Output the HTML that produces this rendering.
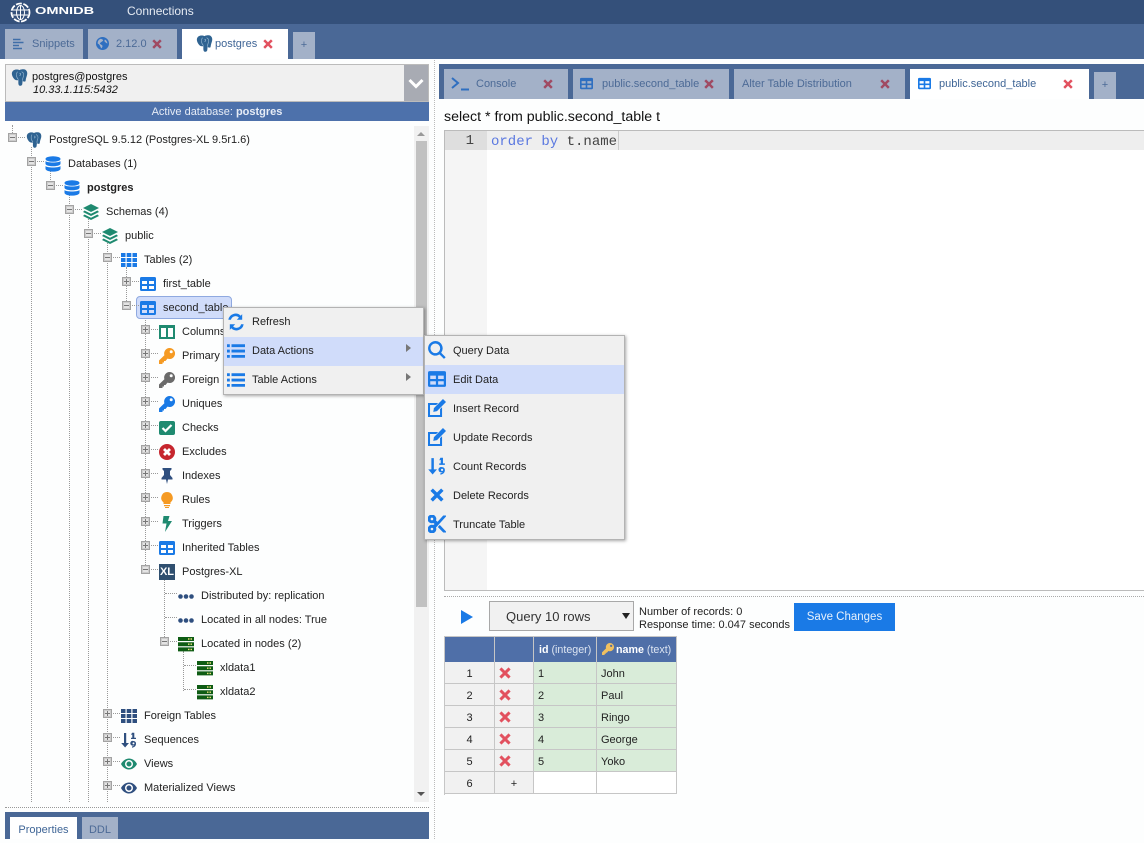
<!DOCTYPE html>
<html><head><meta charset="utf-8"><title>OmniDB</title>
<style>
*{box-sizing:border-box}
html,body{margin:0;padding:0}
body{width:1144px;height:839px;overflow:hidden;position:relative;background:#fdfefe;font:12px "Liberation Sans",sans-serif;color:#222}
div,span,svg{position:absolute;white-space:nowrap}
.tab{background:#a3b1c8;color:#4c6a96;line-height:30px;font-size:11px}
.tab.on{background:#fff;color:#3f6596}
.x{fill:#a04a62}
.r{height:24px;width:300px}
.r i{position:absolute}
.r .b{left:0;top:5px;width:9px;height:9px;background:#e4e4e4;border:1px solid #a3a3a3;box-shadow:inset 0 0 0 1px #ccc}
.r .b:before{content:"";position:absolute;left:1px;top:3px;width:5px;height:1px;background:#777}
.r .p:after{content:"";position:absolute;left:3px;top:1px;width:1px;height:5px;background:#777}
.r .h{left:10px;top:9px;width:7px;border-top:1px dotted #999}
.r .l{left:5px;width:12px}
.r svg{left:18px;top:4px;width:16px;height:16px}
.r span{left:41px;top:0;line-height:24px;font-size:11px;color:#222}
.v{width:0;border-left:1px dotted #999}
.m{background:#f0f0f0;border:1px solid #b3b3b3;box-shadow:1px 1px 3px rgba(0,0,0,.35)}
.i{left:0;right:0;height:29px;line-height:29px;font-size:11px;color:#222}
.m2 .i{line-height:31px}
.i.s{background:#d0dcfa}
.i span{left:28px}
.i svg{left:3px;top:5px;width:18px;height:18px;fill:#1a7ae6}
.i .ar{left:auto;right:12px;top:7px;width:0;height:0;border-left:5px solid #777;border-top:4px solid transparent;border-bottom:4px solid transparent}
.c{border-right:1px solid #c6c6c6;border-bottom:1px solid #c6c6c6;font-size:11px;line-height:25px;height:22px;color:#222}
.n{background:#f1f1f1;text-align:center}
.g{background:#d9ecd9;padding-left:4px}
.w{background:#fff}
.hd{background:#4f6fa8;color:#dde5f2;border-right:1px solid #c6c6c6;height:25px;line-height:27px;font-size:10.7px;top:637px}
.d{width:12px;height:12px;fill:#e2515f}
</style></head><body>
<svg width="0" height="0" style="display:none">
<symbol id="tb" viewBox="0 0 16 16"><path fill-rule="evenodd" d="M1.500 1h13A1.500 1.500 0 0 1 16 2.500v11a1.500 1.500 0 0 1-1.500 1.500h-13A1.500 1.500 0 0 1 0 13.500v-11A1.500 1.500 0 0 1 1.500 1zM2 5v3h5V5zm7 0v3h5V5zM2 10v3h5v-3zm7 0v3h5v-3z"/></symbol>
<symbol id="pg" viewBox="0 0 16 16"><path fill="#2f6391" d="M2 1.500C4 0 6.500.3 8 1c2-.9 4.500-1 6 0 1.700 1.500 1.500 4 .7 6-.6 1.600-.8 3-1 4.500-.9.6-2 .4-2.800-.2l-.3 3c-.3 1.600-2.500 2-3.300.7-.6-1.100-.3-3-.4-4.500C4.500 11 3.300 10 2.300 8.500.8 6.300 0 3.500 2 1.500z"/><path fill="none" stroke="#9fbdd6" stroke-width=".6" d="M6 2.500C4.500 5 5 8 7 10M10 2.500c2 1 2.500 3 1.500 5-.6 1.200-.5 2.500-.5 3.500M8 4c1.500 0 1.500 2 0 2"/></symbol>
<symbol id="db" viewBox="0 0 16 16"><g fill="#1a7ae6"><ellipse cx="8" cy="3" rx="7.500" ry="2.800"/><path d="M.5 5c1 2 14 2 15 0v3c-1 3-14 3-15 0zM.5 10c1 2 14 2 15 0v3c-1 3.500-14 3.500-15 0z"/></g></symbol>
<symbol id="ly" viewBox="0 0 16 16"><g fill="#1f8a70"><path d="M8 0l8 4-8 4-8-4z"/><path d="M1.500 6.500L8 9.800l6.500-3.300L16 8l-8 4-8-4z"/><path d="M1.500 10.500L8 13.800l6.500-3.300L16 12l-8 4-8-4z"/></g></symbol>
<symbol id="gr" viewBox="0 0 16 16"><path d="M0 1h4.500v4H0zM5.700 1h4.600v4H5.700zM11.500 1H16v4h-4.500zM0 6h4.500v4H0zM5.700 6h4.600v4H5.700zM11.500 6H16v4h-4.500zM0 11h4.500v4H0zM5.700 11h4.600v4H5.700zM11.500 11H16v4h-4.500z"/></symbol>
<symbol id="co" viewBox="0 0 16 16"><path fill="#1f8a70" fill-rule="evenodd" d="M0 1h16v14H0zM2 4v9h5V4zm7 0v9h5V4z"/></symbol>
<symbol id="ke" viewBox="0 0 16 16"><path fill-rule="evenodd" d="M10.500 0a5.500 5.500 0 1 1-2 10.600L6.500 13H5v1.500H3.500V16H0v-3.500l5.400-5.300A5.500 5.500 0 0 1 10.500 0zm1.700 2.300a1.500 1.500 0 1 0 0 3 1.500 1.500 0 0 0 0-3z"/></symbol>
<symbol id="ck" viewBox="0 0 16 16"><path fill="#1f8a70" d="M2 1h12a2 2 0 0 1 2 2v10a2 2 0 0 1-2 2H2a2 2 0 0 1-2-2V3a2 2 0 0 1 2-2z"/><path fill="none" stroke="#fff" stroke-width="2.200" d="M3.500 8l3 3 6-6"/></symbol>
<symbol id="ex" viewBox="0 0 16 16"><circle cx="8" cy="8" r="8" fill="#c6262e"/><path stroke="#fff" stroke-width="2.800" d="M5 5l6 6M11 5l-6 6"/></symbol>
<symbol id="pi" viewBox="0 0 16 16"><path fill="#2f4f7f" d="M3.500 0h9v1.500L11 3v4l2.500 3v1.500H9L8 16l-1-4.500H2.500V10L5 7V3L3.500 1.500z"/></symbol>
<symbol id="bu" viewBox="0 0 16 16"><path fill="#f59a23" d="M8 0a5.800 5.800 0 0 1 3.500 10.400V12h-7v-1.600A5.800 5.800 0 0 1 8 0zM5 13h6v1.200H5zM6 15h4v1H6z"/></symbol>
<symbol id="bo" viewBox="0 0 16 16"><path fill="#1f8a70" d="M4.500 0h6L9 5h4L6 16l1.500-8.500H3.500z"/></symbol>
<symbol id="dt" viewBox="0 0 16 16"><g fill="#2f4f7f"><circle cx="2.500" cy="8.500" r="2.300"/><circle cx="8" cy="8.500" r="2.300"/><circle cx="13.500" cy="8.500" r="2.300"/></g></symbol>
<symbol id="sv" viewBox="0 0 16 16"><path fill="#0e5c14" d="M0 1h16v4H0zM0 6.200h16v4H0zM0 11.400h16v4H0z"/><path fill="#e8e07a" d="M10 2.300h1.500v1.400H10zM12.500 2.300H14v1.400h-1.500zM10 7.500h1.500v1.400H10zM12.500 7.500H14v1.400h-1.500zM10 12.700h1.500v1.400H10zM12.500 12.700H14v1.400h-1.500z"/></symbol>
<symbol id="so" viewBox="0 0 16 16"><path d="M3 1h2.200v10H8l-3.900 4.500L.2 11H3z"/><path d="M11 .7h2.300v5H15V7h-5V5.700h1.300V2.500l-1.300.5zM12.500 9a2.500 2.500 0 0 1 2.500 3c-.2 2-1.500 3.400-4 3.700v-1.300c1-.1 1.800-.5 2.100-1.200A2.400 2.400 0 1 1 12.500 9zm0 1.400a1 1 0 1 0 0 2 1 1 0 0 0 0-2z"/></symbol>
<symbol id="ey" viewBox="0 0 16 16"><path fill-rule="evenodd" d="M8 2.500c3.500 0 6.500 2.400 8 5.500-1.500 3.100-4.500 5.500-8 5.500S1.500 11.100 0 8c1.500-3.100 4.500-5.500 8-5.500zM8 4a4 4 0 1 0 0 8 4 4 0 0 0 0-8zm0 1.500a2.500 2.500 0 1 1 0 5 2.500 2.500 0 0 1 0-5z"/></symbol>
<symbol id="li" viewBox="0 0 16 16"><path d="M0 2h2.500v2.500H0zM4 2h12v2.500H4zM0 6.800h2.500v2.500H0zM4 6.800h12v2.500H4zM0 11.500h2.500V14H0zM4 11.500h12V14H4z"/></symbol>
<symbol id="re" viewBox="0 0 16 16"><path d="M13.500 1v5H8.700l1.900-1.900A4.200 4.200 0 0 0 3.500 6H1.200a6.500 6.500 0 0 1 11-3.600zM2.500 15v-5h4.800l-1.900 1.900A4.200 4.200 0 0 0 12.500 10h2.300a6.500 6.500 0 0 1-11 3.600z"/></symbol>
<symbol id="se" viewBox="0 0 16 16"><path fill-rule="evenodd" d="M6.500 0a6.500 6.500 0 0 1 5.200 10.400l4 4-1.500 1.500-4-4A6.500 6.500 0 1 1 6.500 0zm0 2.200a4.300 4.300 0 1 0 0 8.600 4.300 4.300 0 0 0 0-8.600z"/></symbol>
<symbol id="ed" viewBox="0 0 16 16"><path d="M0 3.500h9L7.300 5.300H1.800v8.900h8.900V9l1.800-1.800V16H0z"/><path d="M13.300 0L16 2.700 8 10.800l-3.300.6.600-3.300z"/></symbol>
<symbol id="xx" viewBox="0 0 16 16"><path d="M3.300 1.500L8 6.200l4.700-4.700 2.800 2.800L10.800 9l4.700 4.700-2.800 2.800L8 11.800l-4.700 4.700-2.800-2.800L5.200 9 .5 4.300z" transform="translate(0 -1)"/></symbol>
<symbol id="sc" viewBox="0 0 16 16"><path stroke="#1a7ae6" stroke-width=".7" fill-rule="evenodd" d="M3.500 0a3.500 3.500 0 0 1 3.200 4.900L8.500 6.600 13.700.8H16L6.700 11.100A3.500 3.500 0 1 1 4.800 9.300L6.500 8 4.800 6.700A3.500 3.500 0 1 1 3.500 0zm0 2a1.500 1.500 0 1 0 0 3 1.500 1.500 0 0 0 0-3zm0 9a1.500 1.500 0 1 0 0 3 1.500 1.500 0 0 0 0-3zM10.500 9.300L16 15.200h-2.300L9.200 10.700z"/></symbol>
<symbol id="gl" viewBox="0 0 16 16"><path fill-rule="evenodd" d="M8 0a8 8 0 1 1 0 16A8 8 0 0 1 8 0zM5 2.500C3 3.500 2 5.500 2 8c1 .5 2 1 3 3 .5 1 1 2 1.500 3 1-1 1.500-2 1.500-3 0-1-2-1.500-3-2.500S7 6 8 5c1-.5 1-1.500 0-2S6 2 5 2.500zM11 3c-.5 1-1 2 0 3s2 1.500 3 2c0-2-1-4-3-5z"/></symbol>
<symbol id="sn" viewBox="0 0 16 16"><path d="M0 1h10v2H0zM0 5h14v2H0zM0 9h8v2H0zM0 13h12v2H0z"/></symbol>
</svg>

<!-- top nav -->
<div style="left:0;top:0;width:1144px;height:24px;background:#34507a"></div>
<svg style="left:10px;top:2px;width:21px;height:21px" viewBox="0 0 21 21" fill="none" stroke="#fff"><circle cx="10.500" cy="10.500" r="9" stroke-width="1.800" stroke-dasharray="6 1.500"/><ellipse cx="10.500" cy="10.500" rx="4" ry="7" stroke-width="1"/><path d="M3 8h15M3 13h15M10.500 3v15" stroke-width="1"/></svg>
<div style="left:35px;top:1px;line-height:22px;font-size:10px;font-weight:bold;color:#fff;transform:scaleX(1.46);transform-origin:left">OMNIDB</div>
<div style="left:127px;top:0;line-height:22px;font-size:12px;color:#e6ebf3">Connections</div>

<!-- outer tabs -->
<div style="left:0;top:24px;width:1144px;height:35px;background:#4a6896"></div>
<div class="tab" style="left:5px;top:29px;width:78px;height:30px"><svg style="left:8px;top:9px;width:12px;height:12px;fill:#3f6ea8"><use href="#sn"/></svg><span style="left:27px">Snippets</span></div>
<div class="tab" style="left:88px;top:29px;width:89px;height:30px"><svg style="left:8px;top:8px;width:13px;height:13px;fill:#2f6fc0"><use href="#gl"/></svg><span style="left:28px">2.12.0</span><svg class="x" style="left:64px;top:10px;width:10px;height:10px"><use href="#xx"/></svg></div>
<div class="tab on" style="left:182px;top:29px;width:106px;height:30px"><svg style="left:14px;top:6px;width:17px;height:17px"><use href="#pg"/></svg><span style="left:33px">postgres</span><svg style="left:81px;top:10px;width:10px;height:10px;fill:#e2515f"><use href="#xx"/></svg></div>
<div class="tab" style="left:293px;top:32px;width:22px;height:27px;line-height:27px;text-align:center">+</div>

<!-- connection select -->
<div style="left:5px;top:64px;width:424px;height:38px;background:#f0f0f0;border:1px solid #bbb"></div>
<svg style="left:11px;top:69px;width:17px;height:17px"><use href="#pg"/></svg>
<div style="left:32px;top:70px;line-height:14px;font-size:11px;color:#111">postgres@postgres</div>
<div style="left:33px;top:83px;line-height:14px;font-size:11px;font-style:italic;color:#111">10.33.1.115:5432</div>
<div style="left:404px;top:65px;width:24px;height:36px;background:#a8abb3"></div>
<svg style="left:408px;top:78px;width:16px;height:11px" viewBox="0 0 16 11" fill="none" stroke="#fff" stroke-width="3"><path d="M1.500 2L8 8.500 14.500 2"/></svg>
<div style="left:5px;top:102px;width:424px;height:19px;background:#4d71ab;color:#e6ecf6;text-align:center;line-height:20px;font-size:11px">Active database: <b>postgres</b></div>

<!-- tree scrollbar -->
<div style="left:414px;top:126px;width:15px;height:676px;background:#f1f1f1"></div>
<div style="left:416px;top:141px;width:11px;height:466px;background:#c1c1c1"></div>
<div style="left:417px;top:132px;width:0;height:0;border-left:4px solid transparent;border-right:4px solid transparent;border-bottom:4px solid #999"></div>
<div style="left:417px;top:792px;width:0;height:0;border-left:4px solid transparent;border-right:4px solid transparent;border-top:4px solid #555"></div>

<!-- tree guides -->
<div class="v" style="left:12px;top:125px;height:8px"></div>
<div class="v" style="left:31px;top:147px;height:655px"></div>
<div class="v" style="left:50px;top:170px;height:12px"></div>
<div class="v" style="left:69px;top:195px;height:607px"></div>
<div class="v" style="left:88px;top:219px;height:583px"></div>
<div class="v" style="left:107px;top:243px;height:559px"></div>
<div class="v" style="left:126px;top:267px;height:36px"></div>
<div class="v" style="left:145px;top:315px;height:252px"></div>
<div class="v" style="left:164px;top:579px;height:60px"></div>
<div class="v" style="left:183px;top:651px;height:40px"></div>

<!-- tree rows -->
<div style="left:136px;top:296px;width:96px;height:23px;background:#d0dcfa;border:1px solid #8fa9e0;border-radius:4px"></div>
<div class="r" style="left:8px;top:128px"><i class="b"></i><i class="h"></i><svg><use href="#pg"/></svg><span>PostgreSQL 9.5.12 (Postgres-XL 9.5r1.6)</span></div>
<div class="r" style="left:27px;top:152px"><i class="b"></i><i class="h"></i><svg><use href="#db"/></svg><span>Databases (1)</span></div>
<div class="r" style="left:46px;top:176px"><i class="b"></i><i class="h"></i><svg><use href="#db"/></svg><span><b>postgres</b></span></div>
<div class="r" style="left:65px;top:200px"><i class="b"></i><i class="h"></i><svg><use href="#ly"/></svg><span>Schemas (4)</span></div>
<div class="r" style="left:84px;top:224px"><i class="b"></i><i class="h"></i><svg><use href="#ly"/></svg><span>public</span></div>
<div class="r" style="left:103px;top:248px"><i class="b"></i><i class="h"></i><svg style="fill:#1a7ae6"><use href="#gr"/></svg><span>Tables (2)</span></div>
<div class="r" style="left:122px;top:272px"><i class="b p"></i><i class="h"></i><svg style="fill:#1a7ae6"><use href="#tb"/></svg><span>first_table</span></div>
<div class="r" style="left:122px;top:296px"><i class="b"></i><i class="h"></i><svg style="fill:#1a7ae6"><use href="#tb"/></svg><span>second_table</span></div>
<div class="r" style="left:141px;top:320px"><i class="b p"></i><i class="h"></i><svg><use href="#co"/></svg><span>Columns</span></div>
<div class="r" style="left:141px;top:344px"><i class="b p"></i><i class="h"></i><svg style="fill:#f59a23"><use href="#ke"/></svg><span>Primary</span></div>
<div class="r" style="left:141px;top:368px"><i class="b p"></i><i class="h"></i><svg style="fill:#6b6b6b"><use href="#ke"/></svg><span>Foreign</span></div>
<div class="r" style="left:141px;top:392px"><i class="b p"></i><i class="h"></i><svg style="fill:#1a7ae6"><use href="#ke"/></svg><span>Uniques</span></div>
<div class="r" style="left:141px;top:416px"><i class="b p"></i><i class="h"></i><svg><use href="#ck"/></svg><span>Checks</span></div>
<div class="r" style="left:141px;top:440px"><i class="b p"></i><i class="h"></i><svg><use href="#ex"/></svg><span>Excludes</span></div>
<div class="r" style="left:141px;top:464px"><i class="b p"></i><i class="h"></i><svg><use href="#pi"/></svg><span>Indexes</span></div>
<div class="r" style="left:141px;top:488px"><i class="b p"></i><i class="h"></i><svg><use href="#bu"/></svg><span>Rules</span></div>
<div class="r" style="left:141px;top:512px"><i class="b p"></i><i class="h"></i><svg><use href="#bo"/></svg><span>Triggers</span></div>
<div class="r" style="left:141px;top:536px"><i class="b p"></i><i class="h"></i><svg style="fill:#1a7ae6"><use href="#tb"/></svg><span>Inherited Tables</span></div>
<div class="r" style="left:141px;top:560px"><i class="b"></i><i class="h"></i><div style="left:18px;top:4px;width:16px;height:16px;background:#2f4f6f;color:#fff;font:bold 11px/16px 'Liberation Sans',sans-serif;text-align:center">XL</div><span>Postgres-XL</span></div>
<div class="r" style="left:160px;top:584px"><i class="h l"></i><svg><use href="#dt"/></svg><span>Distributed by: replication</span></div>
<div class="r" style="left:160px;top:608px"><i class="h l"></i><svg><use href="#dt"/></svg><span>Located in all nodes: True</span></div>
<div class="r" style="left:160px;top:632px"><i class="b"></i><i class="h"></i><svg><use href="#sv"/></svg><span>Located in nodes (2)</span></div>
<div class="r" style="left:179px;top:656px"><i class="h l"></i><svg><use href="#sv"/></svg><span>xldata1</span></div>
<div class="r" style="left:179px;top:680px"><i class="h l"></i><svg><use href="#sv"/></svg><span>xldata2</span></div>
<div class="r" style="left:103px;top:704px"><i class="b p"></i><i class="h"></i><svg style="fill:#2f4f7f"><use href="#gr"/></svg><span>Foreign Tables</span></div>
<div class="r" style="left:103px;top:728px"><i class="b p"></i><i class="h"></i><svg style="fill:#2f4f7f"><use href="#so"/></svg><span>Sequences</span></div>
<div class="r" style="left:103px;top:752px"><i class="b p"></i><i class="h"></i><svg style="fill:#1f8a70"><use href="#ey"/></svg><span>Views</span></div>
<div class="r" style="left:103px;top:776px"><i class="b p"></i><i class="h"></i><svg style="fill:#2f4f7f"><use href="#ey"/></svg><span>Materialized Views</span></div>

<!-- bottom left -->
<div style="left:5px;top:807px;width:424px;border-top:1px dotted #999"></div>
<div style="left:5px;top:812px;width:424px;height:27px;background:#4a6896"></div>
<div class="tab on" style="left:10px;top:817px;width:67px;height:22px;line-height:26px;text-align:center">Properties</div>
<div class="tab" style="left:82px;top:817px;width:36px;height:22px;line-height:26px;text-align:center">DDL</div>

<div class="v" style="left:434px;top:60px;height:779px;border-color:#bbb"></div>

<!-- right tabs -->
<div style="left:439px;top:64px;width:705px;height:35px;background:#4a6896"></div>
<div class="tab" style="left:444px;top:69px;width:124px;height:30px"><svg style="left:7px;top:7px;width:18px;height:16px" viewBox="0 0 18 16" fill="none" stroke="#2f6fc0" stroke-width="2"><path d="M1 2l6 5-6 5M10 13.500h8"/></svg><span style="left:32px">Console</span><svg class="x" style="left:99px;top:10px;width:10px;height:10px"><use href="#xx"/></svg></div>
<div class="tab" style="left:573px;top:69px;width:156px;height:30px"><svg style="left:7px;top:8px;width:13px;height:13px;fill:#2f6fc0"><use href="#tb"/></svg><span style="left:29px">public.second_table</span><svg class="x" style="left:131px;top:10px;width:10px;height:10px"><use href="#xx"/></svg></div>
<div class="tab" style="left:734px;top:69px;width:171px;height:30px"><span style="left:8px">Alter Table Distribution</span><svg class="x" style="left:146px;top:10px;width:10px;height:10px"><use href="#xx"/></svg></div>
<div class="tab on" style="left:910px;top:69px;width:179px;height:30px"><svg style="left:8px;top:8px;width:13px;height:13px;fill:#1a7ae6"><use href="#tb"/></svg><span style="left:29px">public.second_table</span><svg style="left:153px;top:10px;width:10px;height:10px;fill:#e2515f"><use href="#xx"/></svg></div>
<div class="tab" style="left:1094px;top:72px;width:22px;height:27px;line-height:27px;text-align:center">+</div>

<!-- editor -->
<div style="left:444px;top:110px;line-height:15px;font-size:14.2px;color:#111">select * from public.second_table t</div>
<div style="left:444px;top:130px;width:700px;height:461px;border:1px solid #bbb;border-right:0;background:#fff"></div>
<div style="left:445px;top:131px;width:42px;height:459px;background:#f5f5f5"></div>
<div style="left:445px;top:131px;width:42px;height:19px;background:#dedede;color:#444;font:14px/20px 'Liberation Mono',monospace;text-align:right;padding-right:13px">1</div>
<div style="left:487px;top:131px;width:657px;height:19px;background:#eee"></div>
<div style="left:491px;top:132px;font:14px/20px 'Liberation Mono',monospace;color:#444"><span style="position:static;color:#5a78e0">order by</span> t.name</div>
<div style="left:618px;top:131px;width:1px;height:19px;background:#ccc"></div>
<div style="left:444px;top:596px;width:700px;border-top:1px dotted #aaa"></div>

<!-- results toolbar -->
<svg style="left:461px;top:610px;width:12px;height:14px" viewBox="0 0 12 14"><path fill="#1a7ae6" d="M0 0l12 7-12 7z"/></svg>
<div style="left:489px;top:601px;width:145px;height:30px;background:#f1f1f1;border:1px solid #a8a8a8;font-size:13px;line-height:29px;color:#333;padding-left:16px">Query 10 rows</div>
<div style="left:622px;top:613px;width:0;height:0;border-left:4px solid transparent;border-right:4px solid transparent;border-top:6px solid #222"></div>
<div style="left:639px;top:606px;line-height:13px;font-size:11px;color:#222">Number of records: 0<br>Response time: 0.047 seconds</div>
<div style="left:794px;top:603px;width:101px;height:28px;background:#1a7ae6;color:#e8f1fc;font-size:11.5px;line-height:28px;text-align:center">Save Changes</div>

<!-- results grid -->
<div style="left:444px;top:636px;width:233px;height:159px;border:1px solid #c6c6c6;border-right:0;border-bottom:0"></div>
<div class="hd" style="left:445px;width:50px"></div>
<div class="hd" style="left:495px;width:39px"></div>
<div class="hd" style="left:534px;width:63px;padding-left:5px"><b style="color:#fff">id</b> (integer)</div>
<div class="hd" style="left:597px;width:80px;padding-left:19px"><svg style="left:5px;top:6px;width:12px;height:12px;fill:#f0c060"><use href="#ke"/></svg><b style="color:#fff">name</b> (text)</div>

<div class="c n" style="left:445px;top:662px;width:50px">1</div><div class="c n" style="left:495px;top:662px;width:39px"><svg class="d" style="left:4px;top:5px"><use href="#xx"/></svg></div><div class="c g" style="left:534px;top:662px;width:63px">1</div><div class="c g" style="left:597px;top:662px;width:80px">John</div>
<div class="c n" style="left:445px;top:684px;width:50px">2</div><div class="c n" style="left:495px;top:684px;width:39px"><svg class="d" style="left:4px;top:5px"><use href="#xx"/></svg></div><div class="c g" style="left:534px;top:684px;width:63px">2</div><div class="c g" style="left:597px;top:684px;width:80px">Paul</div>
<div class="c n" style="left:445px;top:706px;width:50px">3</div><div class="c n" style="left:495px;top:706px;width:39px"><svg class="d" style="left:4px;top:5px"><use href="#xx"/></svg></div><div class="c g" style="left:534px;top:706px;width:63px">3</div><div class="c g" style="left:597px;top:706px;width:80px">Ringo</div>
<div class="c n" style="left:445px;top:728px;width:50px">4</div><div class="c n" style="left:495px;top:728px;width:39px"><svg class="d" style="left:4px;top:5px"><use href="#xx"/></svg></div><div class="c g" style="left:534px;top:728px;width:63px">4</div><div class="c g" style="left:597px;top:728px;width:80px">George</div>
<div class="c n" style="left:445px;top:750px;width:50px">5</div><div class="c n" style="left:495px;top:750px;width:39px"><svg class="d" style="left:4px;top:5px"><use href="#xx"/></svg></div><div class="c g" style="left:534px;top:750px;width:63px">5</div><div class="c g" style="left:597px;top:750px;width:80px">Yoko</div>
<div class="c n" style="left:445px;top:772px;width:50px">6</div><div class="c n" style="left:495px;top:772px;width:39px">+</div><div class="c w" style="left:534px;top:772px;width:63px"></div><div class="c w" style="left:597px;top:772px;width:80px"></div>

<!-- context menus -->
<div class="m" style="left:223px;top:307px;width:201px;height:88px">
<div class="i" style="top:0"><svg><use href="#re"/></svg><span>Refresh</span></div>
<div class="i s" style="top:29px"><svg><use href="#li"/></svg><span>Data Actions</span><div class="ar"></div></div>
<div class="i" style="top:58px"><svg><use href="#li"/></svg><span>Table Actions</span><div class="ar"></div></div>
</div>
<div class="m m2" style="left:424px;top:335px;width:201px;height:205px">
<div class="i" style="top:0"><svg><use href="#se"/></svg><span>Query Data</span></div>
<div class="i s" style="top:29px"><svg><use href="#tb"/></svg><span>Edit Data</span></div>
<div class="i" style="top:58px"><svg><use href="#ed"/></svg><span>Insert Record</span></div>
<div class="i" style="top:87px"><svg><use href="#ed"/></svg><span>Update Records</span></div>
<div class="i" style="top:116px"><svg><use href="#so"/></svg><span>Count Records</span></div>
<div class="i" style="top:145px"><svg style="padding:2px"><use href="#xx"/></svg><span>Delete Records</span></div>
<div class="i" style="top:174px"><svg><use href="#sc"/></svg><span>Truncate Table</span></div>
</div>
</body></html>
